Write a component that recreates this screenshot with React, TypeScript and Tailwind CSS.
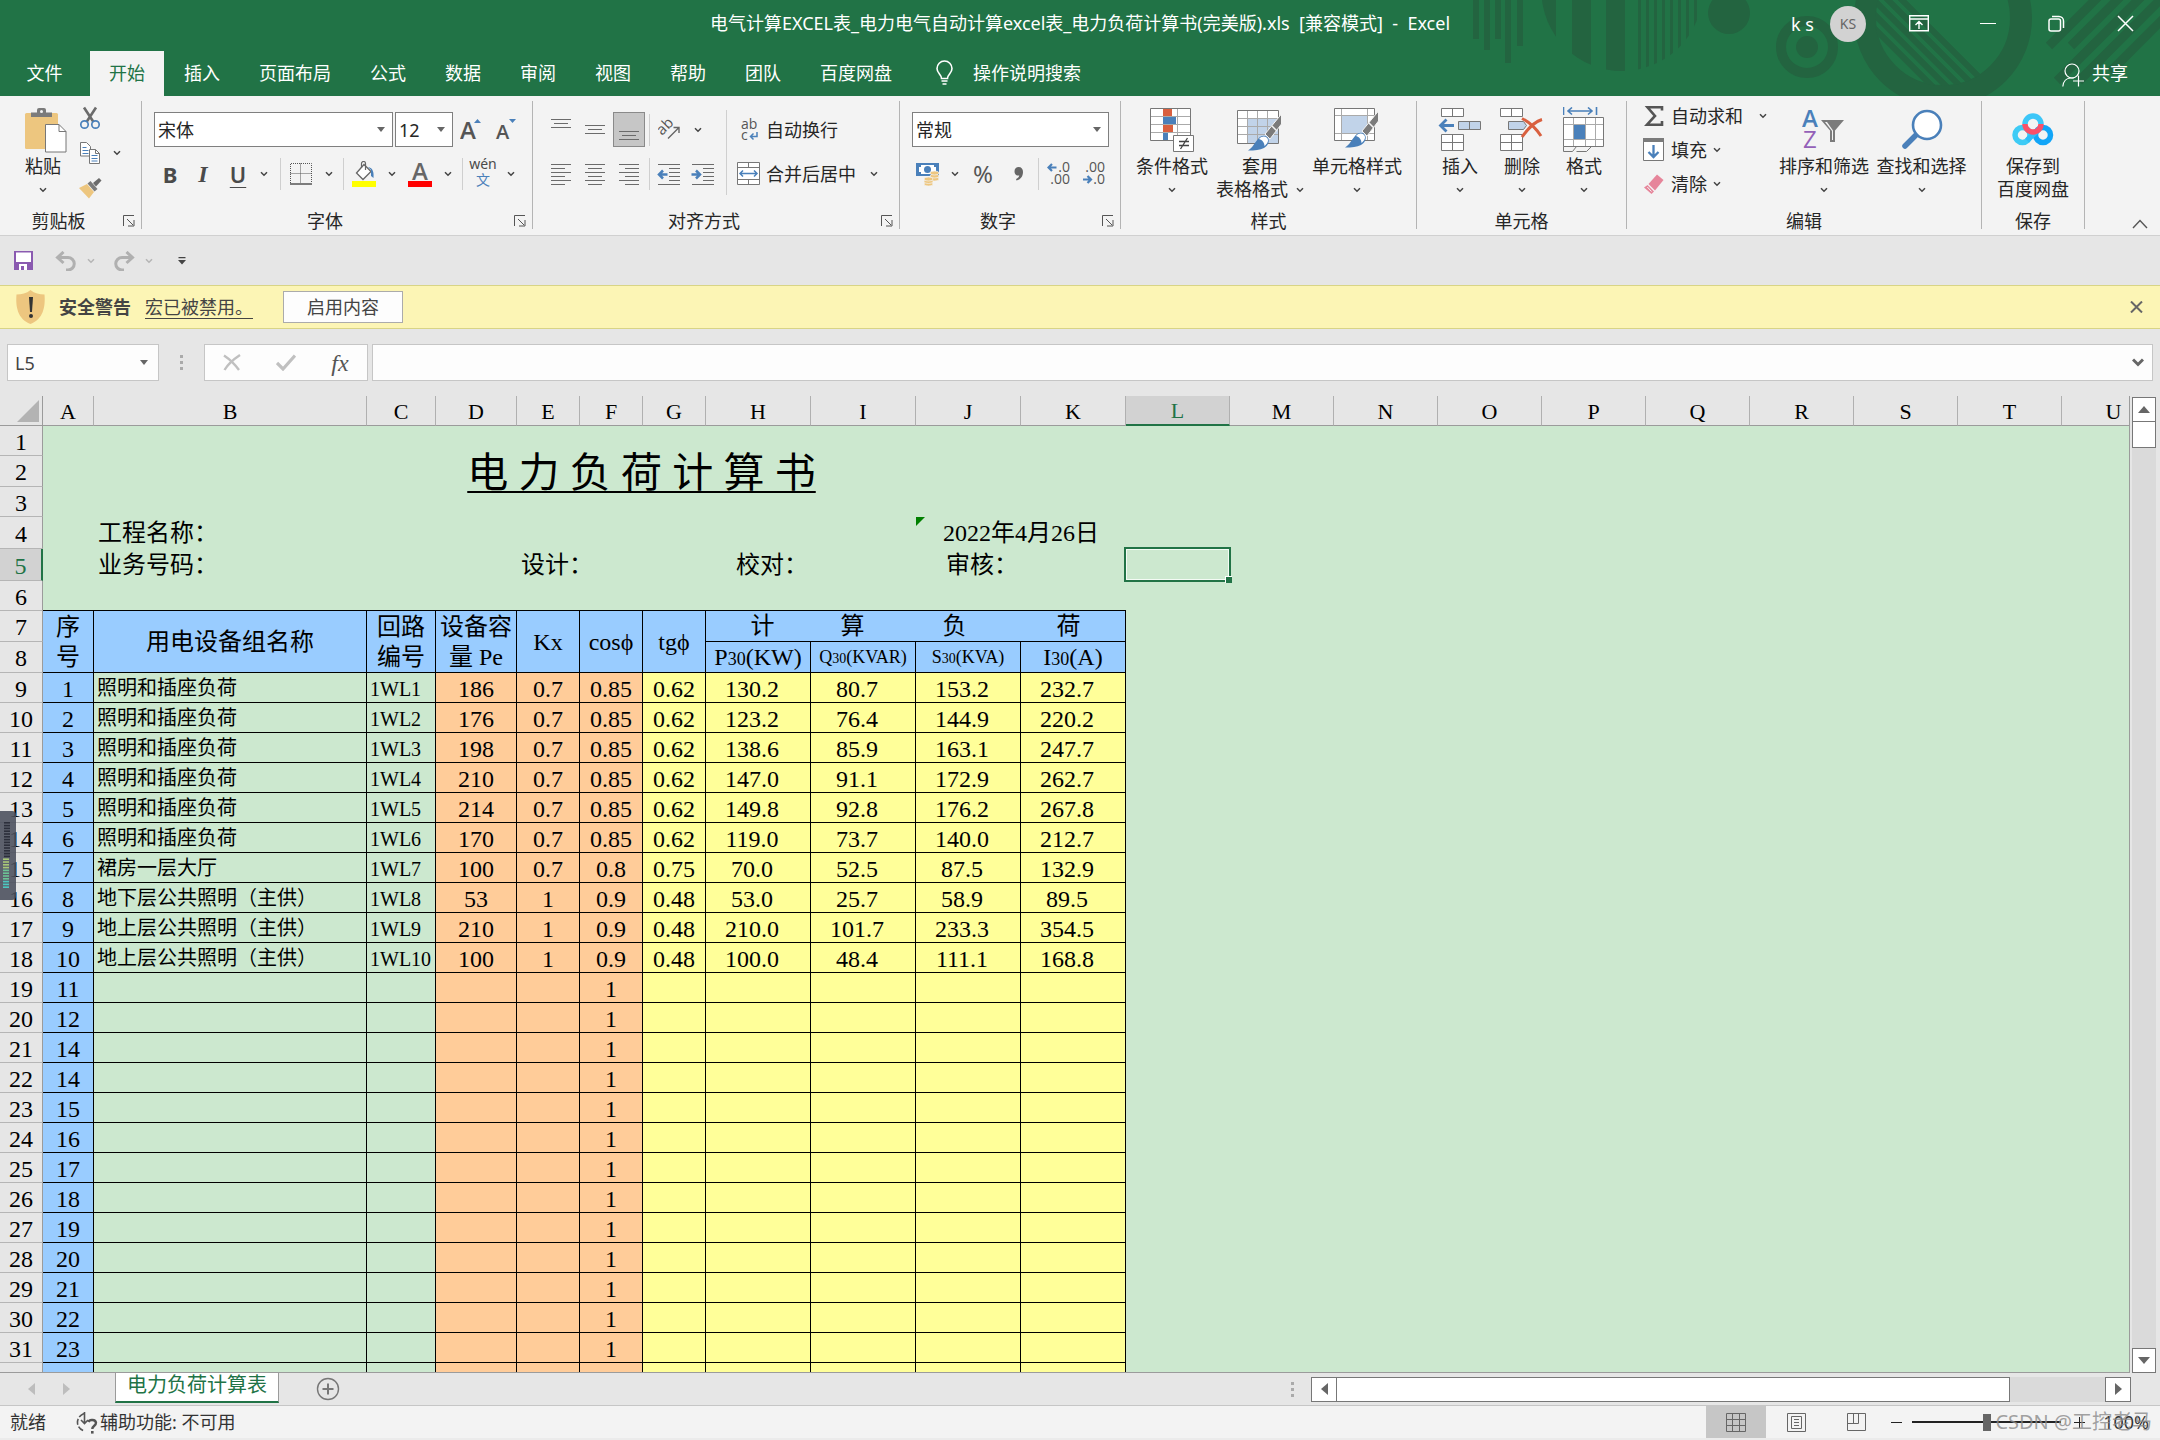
import React from "react";

type Kids = { children?: React.ReactNode };

const GREY = "#6b6b6b";
const BLUE = "#4a80ba";

/* ---------- small shared pieces ---------- */

function Chevron({ color = "#444" }: { color?: string }) {
  return (
    <svg width="8" height="6" viewBox="0 0 8 6" fill="none" stroke={color} strokeWidth="1.5">
      <path d="M1 1.2 4 4.2 7 1.2" />
    </svg>
  );
}

function ChevronButton({ label, color }: { label: string; color?: string }) {
  return (
    <button aria-label={label} className="flex h-9 w-4 shrink-0 items-center justify-center">
      <Chevron color={color} />
    </button>
  );
}

function Divider() {
  return <span className="h-8 w-px shrink-0 bg-[#cfcfcf]" />;
}

function IconButton({ label, className = "w-10", children }: Kids & { label: string; className?: string }) {
  return (
    <button aria-label={label} className={`flex shrink-0 items-center justify-center ${className}`}>
      {children}
    </button>
  );
}

function Group({
  title,
  className,
  launcher = false,
  children,
}: Kids & { title: string; className: string; launcher?: boolean }) {
  return (
    <section aria-label={title} className={`flex shrink-0 ${className}`}>
      <div className="flex min-w-0 flex-1 flex-col">
        <div className="flex h-28">{children}</div>
        <div className="flex h-7 items-center">
          <h2 className="flex-1 text-center text-lg leading-7">{title}</h2>
          {launcher && (
            <button aria-label={`${title}设置`} className="flex h-7 w-6 items-center justify-center">
              <svg width="12" height="12" viewBox="0 0 12 12" fill="none" stroke="#555" strokeWidth="1">
                <path d="M.5 11V.5H11M4 4l6 6M11 5v6H5" />
              </svg>
            </button>
          )}
        </div>
      </div>
      <span className="mt-[5px] h-32 w-px bg-[#b4b4b4]" />
    </section>
  );
}

function BigButton({
  icon,
  line1,
  line2,
  className,
  chevron = true,
}: {
  icon: React.ReactNode;
  line1: string;
  line2?: string;
  className: string;
  chevron?: boolean;
}) {
  return (
    <button className={`mt-2 flex h-[97px] shrink-0 flex-col items-center text-lg ${className}`}>
      <span className="flex h-[51px] items-center justify-center">{icon}</span>
      <span className="h-[23px] leading-[23px] whitespace-nowrap">{line1}</span>
      <span className="flex h-[23px] items-center justify-center gap-2 leading-[23px] whitespace-nowrap">
        {line2}
        {chevron && <Chevron />}
      </span>
    </button>
  );
}

function DropBox({
  label,
  options,
  className,
}: {
  label: string;
  options: string[];
  className: string;
}) {
  return (
    <label className={`relative block h-[35px] shrink-0 border border-[#7f7f7f] bg-white ${className}`}>
      <span className="sr-only">{label}</span>
      <select className="block h-full w-full appearance-none bg-transparent pl-[3px] text-lg leading-7 outline-none">
        {options.map((o) => (
          <option key={o}>{o}</option>
        ))}
      </select>
      <svg className="pointer-events-none absolute top-3.5 right-[7px]" width="8" height="5" viewBox="0 0 8 5">
        <path d="M0 0h8L4 5z" fill="#666" />
      </svg>
    </label>
  );
}

/* ---------- drawings ---------- */

function HeaderArt() {
  const thin = [1638, 1646, 1654, 1662, 1670, 1678, 1686, 1694];
  return (
    <svg
      className="pointer-events-none absolute top-0 right-0"
      width="720"
      height="96"
      viewBox="1440 0 720 96"
      fill="#236440"
      aria-hidden="true"
    >
      <defs>
        <clipPath id="disc">
          <circle cx="1622" cy="-9.6" r="80.6" />
        </clipPath>
        <clipPath id="hole">
          <circle cx="1943" cy="18" r="68" />
        </clipPath>
      </defs>
      <path d="M1473 0h6v39h-6zM1484 0h6v50h-6zM1495 0h6v39h-6zM1505 0h6v63h-6zM1517 0h6v46h-6z" />
      <g clipPath="url(#disc)">
        <path d="M1540 0h16v80h-16zM1572 0h19v80h-19zM1606 0h19v80h-19z" />
        {thin.map((x) => (
          <rect key={x} x={x} y="0" width="3" height="80" />
        ))}
      </g>
      <circle cx="1729" cy="13" r="21" />
      <circle cx="1807" cy="47" r="26" fill="none" stroke="#236440" strokeWidth="10" />
      <circle cx="1807" cy="47" r="11" />
      <circle cx="1943" cy="18" r="78" fill="none" stroke="#236440" strokeWidth="22" />
      <g clipPath="url(#hole)" stroke="#236440" strokeWidth="6">
        <path d="M1872-30 2000 98M1858-30 1986 98M1844-30 1972 98M1830-30 1958 98M1816-30 1944 98" />
      </g>
      <g stroke="#236440" strokeWidth="9">
        <path d="M2049 46 2100-5M2071 46 2122-5M2057 81 2143-5M2079 81 2165-5M2110 72 2170 12" />
      </g>
    </svg>
  );
}

const PasteIcon = () => (
  <svg width="47" height="46" viewBox="-5 0 47 46">
    <rect x="0" y="6" width="33" height="36" rx="1.5" fill="#edc67f" />
    <path d="M6 10V5.500h6V3a2 2 0 0 1 2-2h5a2 2 0 0 1 2 2v2.500h6V10z" fill="#7b7b7b" />
    <circle cx="16.500" cy="4.500" r="1.500" fill="#f3f3f3" />
    <path d="M20.500 17.500h13.500l7 7v20.500h-20.500z" fill="#fff" stroke="#777" />
    <path d="M34 17.500v7h7" fill="none" stroke="#777" />
  </svg>
);

const CutIcon = () => (
  <svg width="22" height="24" viewBox="0 0 22 24" fill="none">
    <path d="M5 1.500 14.500 16M17 1.500 7.500 16" stroke="#6b6b6b" strokeWidth="2.600" />
    <circle cx="5.500" cy="18.500" r="3.700" stroke={BLUE} strokeWidth="1.700" />
    <circle cx="16.500" cy="18.500" r="3.700" stroke={BLUE} strokeWidth="1.700" />
  </svg>
);

const CopyIcon = () => (
  <svg width="22" height="24" viewBox="0 0 22 24" fill="#fff" stroke="#777">
    <path d="M1.500 1.500h6l4 4v9.500h-10z" />
    <path d="M3.500 6.500h4M3.500 9.500h6M3.500 12.500h6" stroke={BLUE} />
    <path d="M10.500 8.500h6l4 4v10h-10z" />
    <path d="M16.500 8.500v4h4" fill="none" />
    <path d="M12.500 14.500h6M12.500 17.500h6M12.500 20h6" stroke={BLUE} />
  </svg>
);

const PainterIcon = () => (
  <svg width="24" height="22" viewBox="0 0 24 22">
    <path d="M1 11 9 7l7 8-5 6.500z" fill="#edc67f" />
    <path d="m9.500 6.500 3-2.500 7 8-3 2.500z" fill="#7b7b7b" />
    <path d="m15 6 6-5 2.500 2.500-5.500 6z" fill="#6b6b6b" />
  </svg>
);

function Lines({ rows, width = 20 }: { rows: [number, number, number][]; width?: number }) {
  return (
    <svg width={width} height="23" viewBox={`0 0 ${width} 23`} stroke={GREY} strokeWidth="1">
      {rows.map(([y, a, b]) => (
        <path key={y} d={`M${a} ${y}.5H${b}`} />
      ))}
    </svg>
  );
}

function IndentIcon({ out }: { out: boolean }) {
  return (
    <svg width="24" height="23" viewBox="0 0 24 23" fill="none" stroke={GREY}>
      <path d="M1 1.500h22M12 5.500h11M12 9.500h11M12 13.500h11M12 17.500h11M1 21.500h22" />
      <path
        d={out ? "M10.500 11.500H2M6 7.500l-4 4 4 4" : "M0.500 11.500H9M5 7.500l4 4-4 4"}
        stroke={BLUE}
        strokeWidth="2.500"
      />
    </svg>
  );
}

const BorderIcon = () => (
  <svg width="22" height="22" viewBox="0 0 22 22" stroke="#555" fill="none">
    <path d="M.5 20V.5h21V20M.5 10.500h21M10.500 .5V20" strokeDasharray="1 1" />
    <path d="M0 21h22" strokeWidth="1.500" />
  </svg>
);

const FillIcon = () => (
  <svg width="24" height="26" viewBox="0 0 24 26" fill="none">
    <path d="M4.500 12 12 3.500 19 10.500 11 18.500z" fill="#fff" stroke="#666" strokeWidth="1.300" />
    <path d="M9.500 7V2.500a2 2 0 0 1 4 0V9" stroke="#666" strokeWidth="1.200" />
    <path d="M16 6c5 1 6 5 5.500 11L19 15V9z" fill={BLUE} />
    <path d="M0 20h24v6H0z" fill="#ff0" />
  </svg>
);

const MergeIcon = () => (
  <svg width="24" height="24" viewBox="0 0 24 24" fill="#fff" stroke="#777">
    <path d="M.5.5h22v22H.5zM.5 5.500h22M.5 17.500h22M11.500.5v5M11.500 17.500v5" />
    <path d="M3 11.500h17M6 8.500l-3 3 3 3M17 8.500l3 3-3 3" stroke={BLUE} strokeWidth="1.500" fill="none" />
  </svg>
);

const WrapIcon = () => (
  <svg width="24" height="24" viewBox="0 0 24 24" fill="none">
    <text x="4" y="11" fontSize="14" fontFamily="Open Sans, sans-serif" fill="#555">ab</text>
    <text x="4" y="22" fontSize="14" fontFamily="Open Sans, sans-serif" fill="#555">c</text>
    <path d="M20 14v4.500h-6M16.500 15.500l-3 3 3 3" stroke={BLUE} strokeWidth="1.500" />
  </svg>
);

const OrientIcon = () => (
  <svg width="24" height="24" viewBox="0 0 24 24" fill="none">
    <g transform="rotate(-45 9 13)">
      <text x="2" y="13" fontSize="15" fontFamily="Open Sans, sans-serif" fill="#555">ab</text>
    </g>
    <path d="M10 20.500 20.500 10M15.500 9.500h5.500v5.500" stroke="#666" strokeWidth="1.400" />
  </svg>
);

const MoneyIcon = () => (
  <svg width="24" height="24" viewBox="0 0 24 24">
    <path d="M0 1h23v13H0z" fill={BLUE} />
    <path d="M3 3h17v9H3z" fill="#fff" />
    <circle cx="11.500" cy="7.500" r="3.500" fill={BLUE} />
    <path d="M2 2h3v3H2zM18 2h3v3h-3zM2 10h3v3H2z" fill={BLUE} />
    <g fill="#edc67f" stroke="#f3f3f3" strokeWidth=".7">
      <ellipse cx="18.500" cy="17" rx="4.500" ry="2" />
      <ellipse cx="18.500" cy="14" rx="4.500" ry="2" />
      <ellipse cx="18.500" cy="11" rx="4.500" ry="2" />
      <ellipse cx="12.500" cy="22" rx="4.500" ry="2" />
      <ellipse cx="12.500" cy="19.500" rx="4.500" ry="2" />
      <ellipse cx="12.500" cy="17" rx="4.500" ry="2" />
    </g>
  </svg>
);

function DecimalIcon({ more }: { more: boolean }) {
  return (
    <svg width="24" height="24" viewBox="0 0 24 24" fill="none">
      <g fontSize="14" fontFamily="Open Sans, sans-serif" fill="#555" textAnchor="end">
        <text x="23" y="10">{more ? ".0" : ".00"}</text>
        <text x="23" y="22">{more ? ".00" : ".0"}</text>
      </g>
      <path
        d={more ? "M9.500 5.500H2M5 2 1.500 5.500 5 9" : "M1 17.500h7.500M5.500 14 9 17.500 5.500 21"}
        stroke={BLUE}
        strokeWidth="2.200"
      />
    </svg>
  );
}

const CondIcon = () => (
  <svg width="45" height="46" viewBox="0 0 45 46">
    <path d="M.5 1.500h40v32H.5z" fill="#fff" stroke="#777" />
    <path d="M1 9.500h39M1 17.500h39M1 25.500h39M13.500 2v31M27.500 2v31" stroke="#aaa" />
    <path d="M13 2h9v7h-9zM13 18h10v7H13z" fill="#d9603f" />
    <path d="M13 10h13v7H13zM13 26h5v7h-5z" fill={BLUE} />
    <path d="M23.500 28.500h20v16h-20z" fill="#fff" stroke="#777" />
    <path d="M29 34.500h10M29 38.500h10M37.500 31l-7 11" stroke="#444" strokeWidth="1.300" />
  </svg>
);

const Brush = () => (
  <g>
    <path d="M44.500 7v10L33 32l-5-5z" fill="#7b7b7b" stroke="#f3f3f3" />
    <path d="m35 19 5 5" stroke="#f3f3f3" strokeWidth="1.500" />
    <path d="M21 32c3-4 8-4 10-1s0 8-4 10-9 2.500-16 2.500c5-3 6-7 10-11.500z" fill={BLUE} />
    <path d="M22 32c3-3.500 7-3 8.500-.5S30 37 27.500 39c0-3-2-6-5.500-7z" fill="#fff" />
  </g>
);

const TableStyleIcon = () => (
  <svg width="46" height="46" viewBox="0 0 46 46">
    <path d="M.5 3.500h41v33H.5z" fill="#fff" stroke="#777" />
    <path d="M10 12h31v24H10z" fill="#c1d3e9" />
    <path d="M1 11.500h40M1 19.500h40M1 27.500h40M10.500 4v32M20.500 4v32M30.500 4v32" stroke="#aaa" />
    <Brush />
  </svg>
);

const CellStyleIcon = () => (
  <svg width="46" height="46" viewBox="0 0 46 46">
    <path d="M.5 1.500h40v32H.5z" fill="#fff" stroke="#777" />
    <path d="M1 8.500h39M1 26.500h39M7.500 2v31M33.500 2v31" stroke="#aaa" />
    <path d="M8 9h25v17H8z" fill="#c1d3e9" />
    <g transform="translate(0 -3)">
      <Brush />
    </g>
  </svg>
);

const InsertIcon = () => (
  <svg width="44" height="46" viewBox="0 0 44 46" fill="#fff" stroke="#777">
    <path d="M3.500 1.500h22v8h-22zM14.500 1.500v8M3.500 27.500h22v16h-22zM14.500 27.500v16M3.500 35.500h22" />
    <path d="M20.500 14.500h22v8h-22zM31.500 14.500v8" fill="#c1d3e9" />
    <path d="M16 18.500H2.500M8.500 12.500l-6 6 6 6" stroke={BLUE} strokeWidth="2.800" fill="none" />
  </svg>
);

const DeleteIcon = () => (
  <svg width="44" height="46" viewBox="0 0 44 46" fill="#fff" stroke="#777">
    <path d="M.5 1.500h22v8H.5zM11.500 1.500v8M.5 27.500h22v16H.5zM11.500 27.500v16M.5 35.500h22" />
    <path d="M8.500 14.500h15l3 4-3 4h-15z" fill="#c1d3e9" />
    <path d="M22 11.500c6 3 14 10 19 17.500M42 12.500c-7 2-14 9-20 17.500" stroke="#d9603f" strokeWidth="3" fill="none" />
  </svg>
);

const FormatIcon = () => (
  <svg width="42" height="46" viewBox="0 0 42 46" fill="#fff" stroke="#777">
    <path d="M.5 10.500h40v29H.5z" />
    <path d="M1 17.500h39M1 32.500h39M10.500 11v28M22.500 11v28M32.500 11v28" stroke="#aaa" />
    <path d="M11 18h11v14H11z" fill={BLUE} stroke="none" />
    <path d="M.5 39.500v5h9l4-5M13.500 44.500h10l5-5" fill="none" />
    <path d="M.5 0v8M33.500 0v8M5 4h24M9 .5 5 4l4 3.500M25 .5 29 4l-4 3.500" stroke={BLUE} strokeWidth="1.600" fill="none" />
  </svg>
);

const SortIcon = () => (
  <svg width="44" height="42" viewBox="0 0 44 42">
    <text x="0" y="18" fontSize="24" fontFamily="Open Sans, sans-serif" fontWeight="600" fill={BLUE}>A</text>
    <text x="1" y="39" fontSize="24" fontFamily="Open Sans, sans-serif" fill="#9460b8">Z</text>
    <path d="M19 11h23L33 21.500V33h-5V21.500z" fill="#7b7b7b" />
    <path d="M23 13h2l6 8.500V31h-1V22z" fill="#f3f3f3" />
  </svg>
);

const SearchIcon = () => (
  <svg width="42" height="42" viewBox="0 0 42 42">
    <path d="M15.500 25.500 4 37" stroke={BLUE} strokeWidth="5.500" strokeLinecap="round" />
    <circle cx="26" cy="16" r="14" fill="#fff" stroke={BLUE} strokeWidth="2.600" />
  </svg>
);

const CloudIcon = () => (
  <svg width="42" height="34" viewBox="0 0 42 34" fill="none" strokeWidth="5.500">
    <circle cx="10.500" cy="22" r="7.500" stroke="#3ecbf5" />
    <circle cx="31" cy="22" r="7.500" stroke="#12a5f7" />
    <path d="M15 27.500 27 16" stroke="#2fbdf8" />
    <path d="M13 11a8 8 0 0 1 16 0" stroke="#3cc6f8" />
    <path d="M13 11a8 8 0 0 0 16 0" stroke="#f9506a" />
  </svg>
);

const SigmaIcon = () => (
  <svg width="22" height="22" viewBox="0 0 22 22" fill="none" stroke="#555" strokeWidth="2.600">
    <path d="M19 5.500V2.300H4.500L12 11l-8 8.700h15V16" />
  </svg>
);

const FillDownIcon = () => (
  <svg width="22" height="24" viewBox="0 0 22 24">
    <path d="M.5.5h20v22H.5z" fill="#fff" stroke="#777" />
    <path d="M0 0h21v4H0z" fill="#7b7b7b" />
    <path d="M10.500 7v12M5.500 14l5 5 5-5" stroke={BLUE} strokeWidth="2.300" fill="none" />
  </svg>
);

const EraserIcon = () => (
  <svg width="22" height="22" viewBox="0 0 22 22" fill="#e6859a">
    <path d="M14 1.500 20.500 7 12 17.500 5.500 11z" />
    <path d="m4.500 12 6.500 6.500L8.500 21 1 14.500z" />
    <path d="m4.300 14 4.200 4.500" stroke="#f3f3f3" />
  </svg>
);

/* ---------- ribbon ---------- */

const TABS = ["开始", "插入", "页面布局", "公式", "数据", "审阅", "视图", "帮助", "团队", "百度网盘"];

function TitleBar() {
  return (
    <header className="relative shrink-0 overflow-hidden bg-[#217346] text-lg text-white">
      <HeaderArt />
      <div className="relative flex h-[51px] items-start">
        <div className="flex-1" />
        <h1 className="h-[47px] leading-[46px] whitespace-pre">
          电气计算EXCEL表_电力电气自动计算excel表_电力负荷计算书(完美版).xls  [兼容模式]  -  Excel
        </h1>
        <div className="flex h-[47px] flex-1 items-center justify-end">
          <span className="mr-4">k s</span>
          <button aria-label="帐户" className="mr-[18px] flex size-9 items-center justify-center rounded-full bg-[#d2d2d2] text-sm text-[#666]">
            KS
          </button>
          <IconButton label="功能区显示选项" className="h-full w-[69px]">
            <svg width="20" height="17" viewBox="0 0 20 17" fill="none" stroke="#fff" strokeWidth="1.400">
              <path d="M.7.7h18.600v15H.7zM.7 4h18.600M10 14V7M6.500 10 10 6.500l3.500 3.500" />
            </svg>
          </IconButton>
          <IconButton label="最小化" className="h-full w-[69px]">
            <span className="h-px w-4 bg-white" />
          </IconButton>
          <IconButton label="还原" className="h-full w-[69px]">
            <svg width="17" height="17" viewBox="0 0 17 17" fill="none" stroke="#fff" strokeWidth="1.500">
              <rect x="1" y="4" width="11.500" height="12" rx="2" />
              <path d="M4 1.500h7a4.500 4.500 0 0 1 4.500 4.500v7" />
            </svg>
          </IconButton>
          <IconButton label="关闭" className="h-full w-[69px]">
            <svg width="17" height="17" viewBox="0 0 17 17" stroke="#fff" strokeWidth="1.500">
              <path d="m1 1 15 15M16 1 1 16" />
            </svg>
          </IconButton>
        </div>
      </div>
      <nav className="relative flex h-[45px] items-stretch gap-px">
        <button className="w-[89px] pb-0.5">文件</button>
        {TABS.map((t, i) => (
          <button key={t} className={i === 0 ? "bg-[#f3f3f3] px-[19px] pb-0.5 text-[#217346]" : "px-[19px] pb-0.5"}>
            {t}
          </button>
        ))}
        <button className="ml-6 flex items-center gap-5 pb-0.5">
          <svg width="17" height="25" viewBox="0 0 17 25" fill="none" stroke="#fff" strokeWidth="1.600">
            <path d="M5.500 18.500c0-4-4.500-5-4.500-10a7.500 7.500 0 0 1 15 0c0 5-4.500 6-4.500 10zM5.500 21h6M6.500 24h4" />
          </svg>
          操作说明搜索
        </button>
        <button className="mr-8 ml-auto flex items-center gap-2 pb-0.5">
          <svg className="mt-1" width="22" height="24" viewBox="0 0 22 24" fill="none" stroke="#fff" strokeWidth="1.200">
            <circle cx="10" cy="8" r="7" />
            <path d="M.8 23.500c.5-5 3.500-8.500 8-8.500h3M16.500 12.500v11M11 18h11" />
          </svg>
          共享
        </button>
      </nav>
    </header>
  );
}

function Ribbon() {
  return (
    <div className="flex h-[140px] shrink-0 overflow-hidden border-b border-[#d0d0d0] bg-[#f3f3f3] text-[#262626]">
      <Group title="剪贴板" launcher className="w-[142px]">
        <BigButton className="ml-5 w-[46px]" icon={<PasteIcon />} line1="粘贴" />
        <div className="mt-1 ml-2 grid h-[105px] w-8 grid-rows-3">
          <IconButton label="剪切" className="w-8"><CutIcon /></IconButton>
          <IconButton label="复制" className="w-8"><CopyIcon /></IconButton>
          <IconButton label="格式刷" className="w-8"><PainterIcon /></IconButton>
        </div>
        <div className="mt-[39px] ml-[3px]">
          <ChevronButton label="复制选项" />
        </div>
      </Group>

      <Group title="字体" launcher className="w-[391px]">
        <div className="mt-4 ml-3 flex flex-col gap-[9px]">
          <div className="flex h-[35px]">
            <DropBox label="字体名称" options={["宋体"]} className="mr-0.5 w-[239px]" />
            <DropBox label="字号" options={["12"]} className="w-[58px]" />
            <IconButton label="增大字号" className="w-9">
              <svg width="22" height="24" viewBox="0 0 22 24">
                <text x="0" y="21" fontSize="24" fontWeight="600" fontFamily="Open Sans, sans-serif" fill="#555">A</text>
                <path d="m14 5 3.500-4L21 5z" fill={BLUE} />
              </svg>
            </IconButton>
            <IconButton label="减小字号" className="w-[34px]">
              <svg width="22" height="24" viewBox="0 0 22 24">
                <text x="1" y="21" fontSize="20" fontWeight="600" fontFamily="Open Sans, sans-serif" fill="#555">A</text>
                <path d="m14 1 3.500 4L21 1z" fill={BLUE} />
              </svg>
            </IconButton>
          </div>
          <div className="flex h-9 items-center text-[22px] text-[#4a4a4a]">
            <button aria-label="加粗" className="w-8 font-bold">B</button>
            <button aria-label="倾斜" className="w-[34px] text-2xl font-bold italic [font-family:'Liberation_Serif',serif]">I</button>
            <button aria-label="下划线" className="w-9 font-semibold underline decoration-1 underline-offset-4">U</button>
            <ChevronButton label="下划线选项" />
            <span className="w-2" />
            <Divider />
            <IconButton label="边框"><BorderIcon /></IconButton>
            <ChevronButton label="边框选项" />
            <span className="w-1.5" />
            <Divider />
            <IconButton label="填充颜色"><FillIcon /></IconButton>
            <ChevronButton label="填充颜色选项" />
            <IconButton label="字体颜色">
              <svg width="24" height="26" viewBox="0 0 24 26">
                <text x="4" y="19" fontSize="24" fontWeight="600" fontFamily="Open Sans, sans-serif" fill="#666">A</text>
                <path d="M0 20h24v6H0z" fill="red" />
              </svg>
            </IconButton>
            <ChevronButton label="字体颜色选项" />
            <span className="w-1.5" />
            <Divider />
            <button aria-label="拼音指南" className="flex w-10 flex-col items-center text-sm">
              <span className="leading-3">wén</span>
              <span className="leading-5 text-[#4a80ba]">文</span>
            </button>
            <ChevronButton label="拼音选项" />
          </div>
        </div>
      </Group>

      <Group title="对齐方式" launcher className="w-[367px]">
        <div className="mt-4 ml-[11px] flex w-[182px] flex-col gap-[9px]">
          <div className="flex h-[35px] items-center">
            <IconButton label="顶端对齐" className="h-[35px] w-[34px] pb-2">
              <Lines rows={[[5, 0, 20], [9, 3, 17], [13, 0, 20]]} />
            </IconButton>
            <IconButton label="垂直居中" className="h-[35px] w-[34px]">
              <Lines rows={[[7, 0, 20], [11, 3, 17], [15, 0, 20]]} />
            </IconButton>
            <IconButton label="底端对齐" className="mx-px h-[35px] w-8 border border-[#8a8a8a] bg-[#c6c6c6]">
              <Lines rows={[[13, 0, 20], [17, 3, 17], [21, 0, 20]]} />
            </IconButton>
            <span className="w-[3px]" />
            <Divider />
            <IconButton label="方向"><OrientIcon /></IconButton>
            <ChevronButton label="方向选项" />
          </div>
          <div className="flex h-9 items-center">
            <IconButton label="左对齐" className="w-[34px]">
              <Lines rows={[[1, 0, 20], [5, 0, 14], [9, 0, 20], [13, 0, 14], [17, 0, 20], [21, 0, 14]]} />
            </IconButton>
            <IconButton label="居中" className="w-[34px]">
              <Lines rows={[[1, 0, 20], [5, 3, 17], [9, 0, 20], [13, 3, 17], [17, 0, 20], [21, 3, 17]]} />
            </IconButton>
            <IconButton label="右对齐" className="w-[34px]">
              <Lines rows={[[1, 0, 20], [5, 6, 20], [9, 0, 20], [13, 6, 20], [17, 0, 20], [21, 6, 20]]} />
            </IconButton>
            <span className="w-[3px]" />
            <Divider />
            <span className="w-0.5" />
            <IconButton label="减少缩进量" className="w-[34px]"><IndentIcon out /></IconButton>
            <IconButton label="增加缩进量" className="w-[34px]"><IndentIcon out={false} /></IconButton>
          </div>
        </div>
        <span className="mt-3.5 h-[85px] w-px bg-[#cfcfcf]" />
        <div className="mt-4 ml-2.5 flex flex-col gap-[9px] text-lg whitespace-nowrap">
          <button className="flex h-[35px] items-center gap-[5px]">
            <WrapIcon />
            自动换行
          </button>
          <div className="flex h-9 items-center">
            <button className="flex items-center gap-[5px]">
              <MergeIcon />
              合并后居中
            </button>
            <span className="w-2.5" />
            <ChevronButton label="合并选项" />
          </div>
        </div>
      </Group>

      <Group title="数字" launcher className="w-[221px]">
        <div className="mt-4 ml-3 flex flex-col gap-[9px]">
          <DropBox label="数字格式" options={["常规"]} className="w-[197px]" />
          <div className="flex h-9 items-center text-2xl text-[#555]">
            <IconButton label="会计数字格式" className="w-8"><MoneyIcon /></IconButton>
            <span className="w-[3px]" />
            <ChevronButton label="会计格式选项" />
            <button aria-label="百分比样式" className="w-10">%</button>
            <IconButton label="千位分隔样式" className="w-8">
              <svg width="10" height="14" viewBox="0 0 10 14" fill="#666">
                <path d="M4.500 0C7.500 0 9 2 9 5c0 4.500-2.500 7.500-6.500 8.500L2 12c2-.8 3-2 3.300-3.500C2 9 .5 7 .5 4.500.5 2 2 0 4.500 0z" />
              </svg>
            </IconButton>
            <span className="w-[3px]" />
            <Divider />
            <IconButton label="增加小数位数"><DecimalIcon more /></IconButton>
            <IconButton label="减少小数位数" className="w-[30px]"><DecimalIcon more={false} /></IconButton>
          </div>
        </div>
      </Group>

      <Group title="样式" className="w-[296px]">
        <BigButton className="ml-[9px] w-[84px]" icon={<CondIcon />} line1="条件格式" />
        <BigButton className="w-[92px]" icon={<TableStyleIcon />} line1="套用" line2="表格格式" />
        <BigButton className="w-[102px]" icon={<CellStyleIcon />} line1="单元格样式" />
      </Group>

      <Group title="单元格" className="w-[210px]">
        <BigButton className="ml-3 w-[62px]" icon={<InsertIcon />} line1="插入" />
        <BigButton className="w-[62px]" icon={<DeleteIcon />} line1="删除" />
        <BigButton className="w-[62px]" icon={<FormatIcon />} line1="格式" />
      </Group>

      <Group title="编辑" className="w-[355px]">
        <div className="mt-[3px] ml-4 flex w-[132px] flex-col text-lg whitespace-nowrap">
          <div className="flex h-[34px] items-center">
            <button className="flex items-center gap-1.5"><SigmaIcon />自动求和</button>
            <span className="w-3" />
            <ChevronButton label="自动求和选项" />
          </div>
          <button className="flex h-[34px] items-center gap-1.5">
            <FillDownIcon />
            填充
            <Chevron />
          </button>
          <button className="flex h-[34px] items-center gap-1.5">
            <EraserIcon />
            清除
            <Chevron />
          </button>
        </div>
        <BigButton className="w-[98px]" icon={<SortIcon />} line1="排序和筛选" />
        <BigButton className="w-[97px]" icon={<SearchIcon />} line1="查找和选择" />
      </Group>

      <Group title="保存" className="w-[103px]">
        <BigButton className="w-full" icon={<CloudIcon />} line1="保存到" line2="百度网盘" chevron={false} />
      </Group>

      <div className="flex flex-1 items-end justify-end pr-3 pb-1.5">
        <button aria-label="折叠功能区">
          <svg width="16" height="10" viewBox="0 0 16 10" fill="none" stroke="#555" strokeWidth="1.400">
            <path d="m1 9 7-7.500L15 9" />
          </svg>
        </button>
      </div>
    </div>
  );
}

function QuickAccess() {
  return (
    <div className="flex h-[49px] shrink-0 items-center bg-[#e6e6e6] pl-3.5">
      <button aria-label="保存">
        <svg width="19" height="19" viewBox="0 0 19 19">
          <path d="M0 0h19v19H0z" fill="#8a5ab0" />
          <path d="M2 1.500h15V11H2zM5 13h8v6H5z" fill="#fff" />
          <path d="M7 15h3v4H7z" fill="#8a5ab0" />
        </svg>
      </button>
      <button aria-label="撤消" className="ml-[22px]">
        <svg width="22" height="20" viewBox="0 0 22 20" fill="none" stroke="#b0b0b0" strokeWidth="3">
          <path d="M8.500 1 2.500 6.500l6 5.500M3 6.500h10a6 6 0 0 1 0 12.500h-2" />
        </svg>
      </button>
      <span className="w-1.5" />
      <ChevronButton label="撤消选项" color="#b5b5b5" />
      <button aria-label="恢复" className="ml-[14px]">
        <svg width="22" height="20" viewBox="0 0 22 20" fill="none" stroke="#b0b0b0" strokeWidth="3">
          <path d="m13.500 1 6 5.500-6 5.500M19 6.500H9A6 6 0 0 0 9 19h2" />
        </svg>
      </button>
      <span className="w-1.5" />
      <ChevronButton label="恢复选项" color="#b5b5b5" />
      <button aria-label="自定义快速访问工具栏" className="ml-[21px]">
        <svg width="8" height="8" viewBox="0 0 8 8" fill="#444">
          <path d="M.5 0h7v1.300h-7zM0 3h8L4 7.500z" />
        </svg>
      </button>
    </div>
  );
}

function WarningBar() {
  return (
    <div className="flex h-11 shrink-0 items-center border-y border-[#d8d486] bg-[#fcf5b5] pr-[17px] pl-[15px] text-lg text-[#444]">
      <svg width="31" height="34" viewBox="0 0 31 34">
        <path d="M15.500 0c4 3.500 9 4.500 14 4.500 1 12-1 24.500-14 29.500C2.500 29 .5 16.500 1.500 4.500c5 0 10-1 14-4.500z" fill="#edc67f" />
        <path d="M14 7h4l-1 15h-2z" fill="#333" />
        <circle cx="16" cy="26" r="2" fill="#333" />
      </svg>
      <strong className="ml-[13px] font-bold">安全警告</strong>
      <a href="#macro" className="ml-3.5 underline decoration-1 underline-offset-4">宏已被禁用。</a>
      <button className="ml-[30px] h-8 w-[120px] border border-[#ababab] bg-[#fdfdfd]">启用内容</button>
      <button aria-label="关闭消息" className="ml-auto">
        <svg width="13" height="12" viewBox="0 0 13 12" stroke="#666" strokeWidth="2">
          <path d="m1 .5 11 11M12 .5 1 11.500" />
        </svg>
      </button>
    </div>
  );
}

function FormulaBar() {
  return (
    <div className="flex h-[67px] shrink-0 bg-[#e6e6e6] pt-[15px] pr-[7px] pl-[7px]">
      <label className="flex h-[37px] w-[152px] items-center border border-[#c6c6c6] bg-[#fdfdfd] pr-2.5 pl-[7px]">
        <span className="sr-only">名称框</span>
        <input defaultValue="L5" className="min-w-0 flex-1 bg-transparent text-lg leading-7 text-[#444] outline-none" />
        <svg width="8" height="5" viewBox="0 0 8 5"><path d="M0 0h8L4 5z" fill="#666" /></svg>
      </label>
      <span className="flex h-[37px] w-[45px] flex-col items-center justify-center gap-[3px]">
        <i className="size-[3px] bg-[#aaa]" />
        <i className="size-[3px] bg-[#aaa]" />
        <i className="size-[3px] bg-[#aaa]" />
      </span>
      <div className="flex h-[37px] w-[164px] items-center border border-[#c6c6c6] bg-[#fdfdfd]">
        <IconButton label="取消" className="w-[54px]">
          <svg width="18" height="17" viewBox="0 0 18 17" stroke="#c0c0c0" strokeWidth="2.400" fill="none">
            <path d="M1 1.500c6 4 11 9 15 14.500M17 1C11 5 5 10 1.500 16" />
          </svg>
        </IconButton>
        <IconButton label="输入" className="w-[54px]">
          <svg width="20" height="17" viewBox="0 0 20 17" stroke="#c0c0c0" strokeWidth="3.200" fill="none">
            <path d="m1 9 6 6L19 1.500" />
          </svg>
        </IconButton>
        <button aria-label="插入函数" className="w-[54px] text-2xl text-[#555] italic [font-family:'Liberation_Serif',serif]">
          fx
        </button>
      </div>
      <label className="ml-1 flex h-[37px] flex-1 items-center border border-[#c6c6c6] bg-[#fdfdfd] pr-2">
        <span className="sr-only">编辑栏</span>
        <input className="min-w-0 flex-1 bg-transparent px-2 text-lg outline-none" />
        <svg width="12" height="9" viewBox="0 0 12 9" fill="none" stroke="#666" strokeWidth="3">
          <path d="m1 1.500 5 5 5-5" />
        </svg>
      </label>
    </div>
  );
}

/* ---------- sheet ---------- */

const HEAD = "ABCDEFGHIJKLMNOPQRSTU".split("");
const COLS = [
  "w-[43px]", "w-[51px]", "w-[273px]", "w-[69px]", "w-[81px]", "w-[63px]", "w-[63px]", "w-[63px]",
  "w-[105px]", "w-[105px]", "w-[105px]", "w-[105px]",
  "w-[104px]", "w-[104px]", "w-[104px]", "w-[104px]", "w-[104px]", "w-[104px]", "w-[104px]", "w-[104px]", "w-[104px]", "w-[104px]",
];

const DATA: string[][] = [
  ["1", "照明和插座负荷", "1WL1", "186", "0.7", "0.85", "0.62", "130.2", "80.7", "153.2", "232.7"],
  ["2", "照明和插座负荷", "1WL2", "176", "0.7", "0.85", "0.62", "123.2", "76.4", "144.9", "220.2"],
  ["3", "照明和插座负荷", "1WL3", "198", "0.7", "0.85", "0.62", "138.6", "85.9", "163.1", "247.7"],
  ["4", "照明和插座负荷", "1WL4", "210", "0.7", "0.85", "0.62", "147.0", "91.1", "172.9", "262.7"],
  ["5", "照明和插座负荷", "1WL5", "214", "0.7", "0.85", "0.62", "149.8", "92.8", "176.2", "267.8"],
  ["6", "照明和插座负荷", "1WL6", "170", "0.7", "0.85", "0.62", "119.0", "73.7", "140.0", "212.7"],
  ["7", "裙房一层大厅", "1WL7", "100", "0.7", "0.8", "0.75", "70.0", "52.5", "87.5", "132.9"],
  ["8", "地下层公共照明（主供）", "1WL8", "53", "1", "0.9", "0.48", "53.0", "25.7", "58.9", "89.5"],
  ["9", "地上层公共照明（主供）", "1WL9", "210", "1", "0.9", "0.48", "210.0", "101.7", "233.3", "354.5"],
  ["10", "地上层公共照明（主供）", "1WL10", "100", "1", "0.9", "0.48", "100.0", "48.4", "111.1", "168.8"],
  ...["11", "12", "14", "14", "15", "16", "17", "18", "19", "20", "21", "22", "23", "24"].map((n) => [
    n, "", "", "", "", "1", "", "", "", "", "",
  ]),
];

const LINE = "border-r border-b border-black";
const CELL = [
  `${LINE} bg-[#99ccff] pt-0.5 text-center`,
  `${LINE} pl-[3px] text-xl leading-[26px]`,
  `${LINE} pt-0.5 pl-[3px] text-xl leading-[26px]`,
  `${LINE} bg-[#ffcc99] pt-0.5 text-center`,
  `${LINE} bg-[#ffcc99] pt-0.5 text-center`,
  `${LINE} bg-[#ffcc99] pt-0.5 text-center`,
  `${LINE} bg-[#ffff99] pt-0.5 text-center`,
  `${LINE} bg-[#ffff99] pt-0.5 pr-3 text-center`,
  `${LINE} bg-[#ffff99] pt-0.5 pr-3 text-center`,
  `${LINE} bg-[#ffff99] pt-0.5 pr-3 text-center`,
  `${LINE} bg-[#ffff99] pt-0.5 pr-3 text-center`,
];
const BLUE_HEAD = `${LINE} bg-[#99ccff] text-center font-normal`;
const TALL_HEAD = `${BLUE_HEAD} leading-[30px]`;

function RowHead({ n, selected = false }: { n: number; selected?: boolean }) {
  return (
    <th
      scope="row"
      className={
        selected
          ? "border-r-2 border-b border-r-[#217346] border-b-[#b5b5b5] bg-[#d2d2d2] pt-0.5 font-normal text-[#217346]"
          : "border-r border-b border-r-[#9b9b9b] border-b-[#b5b5b5] bg-[#e6e6e6] pt-0.5 font-normal"
      }
    >
      {n}
    </th>
  );
}

function Sub({ a, b, small = false }: { a: string; b: string; small?: boolean }) {
  return (
    <th scope="col" className={small ? `${BLUE_HEAD} pt-0.5 text-lg leading-[26px]` : `${BLUE_HEAD} pt-0.5`}>
      {a}
      <span className={small ? "text-sm leading-[26px]" : "text-lg leading-[26px]"}>30</span>
      {b}
    </th>
  );
}

function Sheet() {
  return (
    <div className="min-h-0 min-w-0 flex-1 overflow-hidden border-r border-b border-[#9b9b9b] bg-[#cce8cf]">
      <table className="w-[2166px] table-fixed border-separate border-spacing-0 text-2xl leading-[26px] text-black [font-family:'Liberation_Serif','Noto_Sans_CJK_SC',serif]">
        <colgroup>
          {COLS.map((w, i) => (
            <col key={i} className={w} />
          ))}
        </colgroup>
        <thead>
          <tr className="h-[30px]">
            <th className="border-r border-b border-[#9b9b9b] bg-[#e6e6e6]">
              <svg className="ml-auto mr-[3px]" width="22" height="22" viewBox="0 0 22 22">
                <path d="M22 0v22H0z" fill="#b3b3b3" />
              </svg>
            </th>
            {HEAD.map((c) => (
              <th
                key={c}
                scope="col"
                className={
                  c === "L"
                    ? "border-r border-b-2 border-r-[#b0b0b0] border-b-[#217346] bg-[#d2d2d2] pt-0.5 text-[22px] leading-[26px] font-normal text-[#217346]"
                    : "border-r border-b border-r-[#b0b0b0] border-b-[#9b9b9b] bg-[#e6e6e6] pt-0.5 text-[22px] leading-[26px] font-normal"
                }
              >
                {c}
              </th>
            ))}
          </tr>
        </thead>
        <tbody>
          <tr className="h-[30px]">
            <RowHead n={1} />
            <td colSpan={2} />
            <td colSpan={7} rowSpan={3} className="pt-0.5 text-center text-[41px] leading-[48px]">
              <span className="underline decoration-2 underline-offset-4">电 力 负 荷 计 算 书</span>
            </td>
            <td colSpan={12} />
          </tr>
          <tr className="h-[31px]">
            <RowHead n={2} />
            <td colSpan={2} />
            <td colSpan={12} />
          </tr>
          <tr className="h-[30px]">
            <RowHead n={3} />
            <td colSpan={2} />
            <td colSpan={12} />
          </tr>
          <tr className="h-8">
            <RowHead n={4} />
            <td />
            <td className="pl-1">工程名称：</td>
            <td colSpan={7} />
            <td colSpan={2} className="relative text-center">
              <svg className="absolute top-0 left-0" width="9" height="9" viewBox="0 0 9 9">
                <path d="M0 0h9L0 9z" fill="#008000" />
              </svg>
              2022年4月26日
            </td>
            <td colSpan={10} />
          </tr>
          <tr className="h-8">
            <RowHead n={5} selected />
            <td />
            <td className="pl-1">业务号码：</td>
            <td colSpan={2} />
            <td colSpan={3} className="pl-1">设计：</td>
            <td colSpan={2} className="pl-[30px]">校对：</td>
            <td colSpan={2} className="pl-[30px]">审核：</td>
            <td className="relative">
              <span className="absolute -top-0.5 -right-px -bottom-px -left-0.5 border-2 border-[#217346] outline outline-1 -outline-offset-3 outline-[#f4fbf5]" />
              <span className="absolute -right-0.5 -bottom-0.5 size-[7px] border-t border-l border-white bg-[#217346]" />
            </td>
            <td colSpan={9} />
          </tr>
          <tr className="h-[30px]">
            <RowHead n={6} />
            <td colSpan={11} className="border-b border-black" />
            <td colSpan={10} />
          </tr>
          <tr className="h-[31px]">
            <RowHead n={7} />
            <th scope="col" rowSpan={2} className={TALL_HEAD}>序<br />号</th>
            <th scope="col" rowSpan={2} className={TALL_HEAD}>用电设备组名称</th>
            <th scope="col" rowSpan={2} className={TALL_HEAD}>回路<br />编号</th>
            <th scope="col" rowSpan={2} className={TALL_HEAD}>设备容<br />量 Pe</th>
            <th scope="col" rowSpan={2} className={TALL_HEAD}>Kx</th>
            <th scope="col" rowSpan={2} className={TALL_HEAD}>cosϕ</th>
            <th scope="col" rowSpan={2} className={TALL_HEAD}>tgϕ</th>
            <th scope="colgroup" colSpan={4} className={`${BLUE_HEAD} whitespace-pre`}>
              {"计" + " ".repeat(11) + "算" + " ".repeat(13) + "负" + " ".repeat(15) + "荷"}
            </th>
            <td colSpan={10} />
          </tr>
          <tr className="h-[31px]">
            <RowHead n={8} />
            <Sub a="P" b="(KW)" />
            <Sub a="Q" b="(KVAR)" small />
            <Sub a="S" b="(KVA)" small />
            <Sub a="I" b="(A)" />
            <td colSpan={10} />
          </tr>
          {DATA.map((row, r) => (
            <tr key={r} className="h-[30px]">
              <RowHead n={r + 9} />
              {row.map((v, c) => (
                <td key={c} className={CELL[c]}>{v}</td>
              ))}
              <td colSpan={10} />
            </tr>
          ))}
        </tbody>
      </table>
    </div>
  );
}

function VerticalScroll() {
  return (
    <div className="flex w-[30px] shrink-0 flex-col bg-[#e6e6e6] pt-px pr-1 pl-0.5">
      <button aria-label="向上滚动" className="flex h-[25px] items-center justify-center border border-[#777] bg-white">
        <svg width="12" height="7" viewBox="0 0 12 7"><path d="M6 0 12 7H0z" fill="#666" /></svg>
      </button>
      <div className="flex-1 bg-[#dadada]">
        <div className="h-[26px] border border-t-0 border-[#777] bg-white" />
      </div>
      <button aria-label="向下滚动" className="flex h-[25px] items-center justify-center border border-[#777] bg-white">
        <svg width="12" height="7" viewBox="0 0 12 7"><path d="M0 0h12L6 7z" fill="#666" /></svg>
      </button>
    </div>
  );
}

function TabBar() {
  return (
    <div className="flex h-[33px] shrink-0 border-b border-[#c6c6c6] bg-[#e6e6e6] pr-[29px]">
      <div className="flex w-[115px] items-center gap-7 pl-7">
        <button aria-label="上一个工作表">
          <svg width="7" height="12" viewBox="0 0 7 12"><path d="M7 0v12L0 6z" fill="#bdbdbd" /></svg>
        </button>
        <button aria-label="下一个工作表">
          <svg width="7" height="12" viewBox="0 0 7 12"><path d="M0 0v12l7-6z" fill="#bdbdbd" /></svg>
        </button>
      </div>
      <button className="h-[30px] w-[164px] border-x border-b-2 border-x-[#9b9b9b] border-b-[#217346] bg-white pb-1 text-xl leading-6 text-[#217346]">
        电力负荷计算表
      </button>
      <button aria-label="新工作表" className="ml-[37px]">
        <svg width="24" height="24" viewBox="0 0 24 24" fill="none" stroke="#777" strokeWidth="1.400">
          <circle cx="12" cy="12" r="10.500" />
          <path d="M12 6.500v11M6.500 12h11" strokeWidth="2" />
        </svg>
      </button>
      <div className="ml-auto flex w-[841px] items-center">
        <span className="mr-4 flex w-[5px] flex-col items-center gap-[3px]">
          <i className="size-[3px] bg-[#aaa]" />
          <i className="size-[3px] bg-[#aaa]" />
          <i className="size-[3px] bg-[#aaa]" />
        </span>
        <button aria-label="向左滚动" className="flex h-[25px] w-[26px] items-center justify-center border border-[#777] bg-white">
          <svg width="7" height="12" viewBox="0 0 7 12"><path d="M7 0v12L0 6z" fill="#666" /></svg>
        </button>
        <div className="flex h-[25px] flex-1 bg-[#dadada]">
          <div className="w-[673px] border border-l-0 border-[#777] bg-white" />
        </div>
        <button aria-label="向右滚动" className="flex h-[25px] w-[26px] items-center justify-center border border-[#777] bg-white">
          <svg width="7" height="12" viewBox="0 0 7 12"><path d="M0 0v12l7-6z" fill="#666" /></svg>
        </button>
      </div>
    </div>
  );
}

function StatusBar() {
  return (
    <footer className="relative flex h-[34px] shrink-0 items-center border-b-2 border-[#ebebeb] bg-[#f3f3f3] pl-2.5 text-lg leading-7 text-[#333]">
      <span>就绪</span>
      <span className="ml-[30px] flex items-center gap-0.5">
        <svg width="22" height="23" viewBox="0 0 22 23" fill="none" stroke="#555" strokeWidth="1.600">
          <path d="M8 2.500C3.500 4.500 1.200 8 1.500 12c.3 3.500 2.500 6.500 6 7.500" strokeDasharray="6 2" />
          <path d="M8.500 1v11M5 9l3.500 3.500L12 9" />
          <path d="M12.500 11c1-3 7-2.500 7.500.7.200 3-3.700 3-3.700 6.300" strokeWidth="2.400" />
          <path d="M16.300 20v2.600" strokeWidth="2.600" />
        </svg>
        辅助功能: 不可用
      </span>
      <div className="ml-auto flex h-full items-center pr-[11px]">
        <button aria-label="普通" className="flex h-full w-[60px] items-center justify-center bg-[#c6c6c6]">
          <svg width="20" height="19" viewBox="0 0 20 19" fill="none" stroke="#666">
            <path d="M.5.5h19v18H.5zM.5 6.500h19M.5 12.500h19M6.500 .5v18M13.500 .5v18" />
          </svg>
        </button>
        <button aria-label="页面布局视图" className="flex h-full w-[60px] items-center justify-center">
          <svg width="19" height="19" viewBox="0 0 19 19" fill="none" stroke="#666">
            <path d="M.5.5h18v18H.5zM4.500 3.500h10v12h-10zM7 6.500h5M7 9.500h5M7 12.500h5" />
          </svg>
        </button>
        <button aria-label="分页预览" className="flex h-full w-[60px] items-center justify-center">
          <svg width="19" height="18" viewBox="0 0 19 18" fill="none" stroke="#666">
            <path d="M.5.5h18v17H.5zM.5 10.500h11V.5M6.500.5v10" />
          </svg>
        </button>
        <button aria-label="缩小" className="flex h-full w-5 items-center justify-center">
          <span className="h-px w-[11px] bg-[#222]" />
        </button>
        <label className="ml-1.5">
          <span className="sr-only">显示比例</span>
          <input
            type="range"
            min="10"
            max="190"
            defaultValue="100"
            className="block h-[17px] w-[149px] appearance-none bg-[linear-gradient(#222,#222)] bg-size-[100%_2px] bg-center bg-no-repeat [&::-webkit-slider-thumb]:h-[17px] [&::-webkit-slider-thumb]:w-2 [&::-webkit-slider-thumb]:appearance-none [&::-webkit-slider-thumb]:bg-[#666]"
          />
        </label>
        <button aria-label="放大" className="mx-2 flex w-5 items-center justify-center">
          <svg width="11" height="11" viewBox="0 0 11 11" stroke="#222"><path d="M0 5.500h11M5.500 0v11" /></svg>
        </button>
        <span className="ml-1.5">100%</span>
      </div>
      <span className="pointer-events-none absolute top-0.5 right-2 text-xl leading-7 text-[#8a8a8a]/80">
        CSDN @工控老马
      </span>
    </footer>
  );
}

function LevelMeter() {
  const bars = Array.from({ length: 24 }, (_, i) => i);
  return (
    <svg className="absolute top-[811px] left-0" width="17" height="89" viewBox="0 0 17 89" aria-hidden="true">
      <rect x="-6" y="0" width="22" height="89" rx="4" fill="#4a4e5c" fillOpacity=".88" />
      {bars.map((i) => (
        <rect
          key={i}
          x={i < 13 ? 4 : 3}
          y={11 + i * 2.8}
          width="6"
          height="1.6"
          fill={i < 13 ? "#2c2f3b" : i < 17 ? "#a8c878" : i < 21 ? "#6cc496" : "#4cc8c0"}
        />
      ))}
    </svg>
  );
}

export default function App() {
  return (
    <div className="relative flex h-screen min-h-[600px] w-full flex-col overflow-hidden bg-[#e6e6e6] [font-family:'Noto_Sans','Noto_Sans_CJK_SC',sans-serif]">
      <TitleBar />
      <Ribbon />
      <QuickAccess />
      <WarningBar />
      <FormulaBar />
      <main className="flex min-h-0 flex-1">
        <Sheet />
        <VerticalScroll />
      </main>
      <TabBar />
      <StatusBar />
      <LevelMeter />
    </div>
  );
}
